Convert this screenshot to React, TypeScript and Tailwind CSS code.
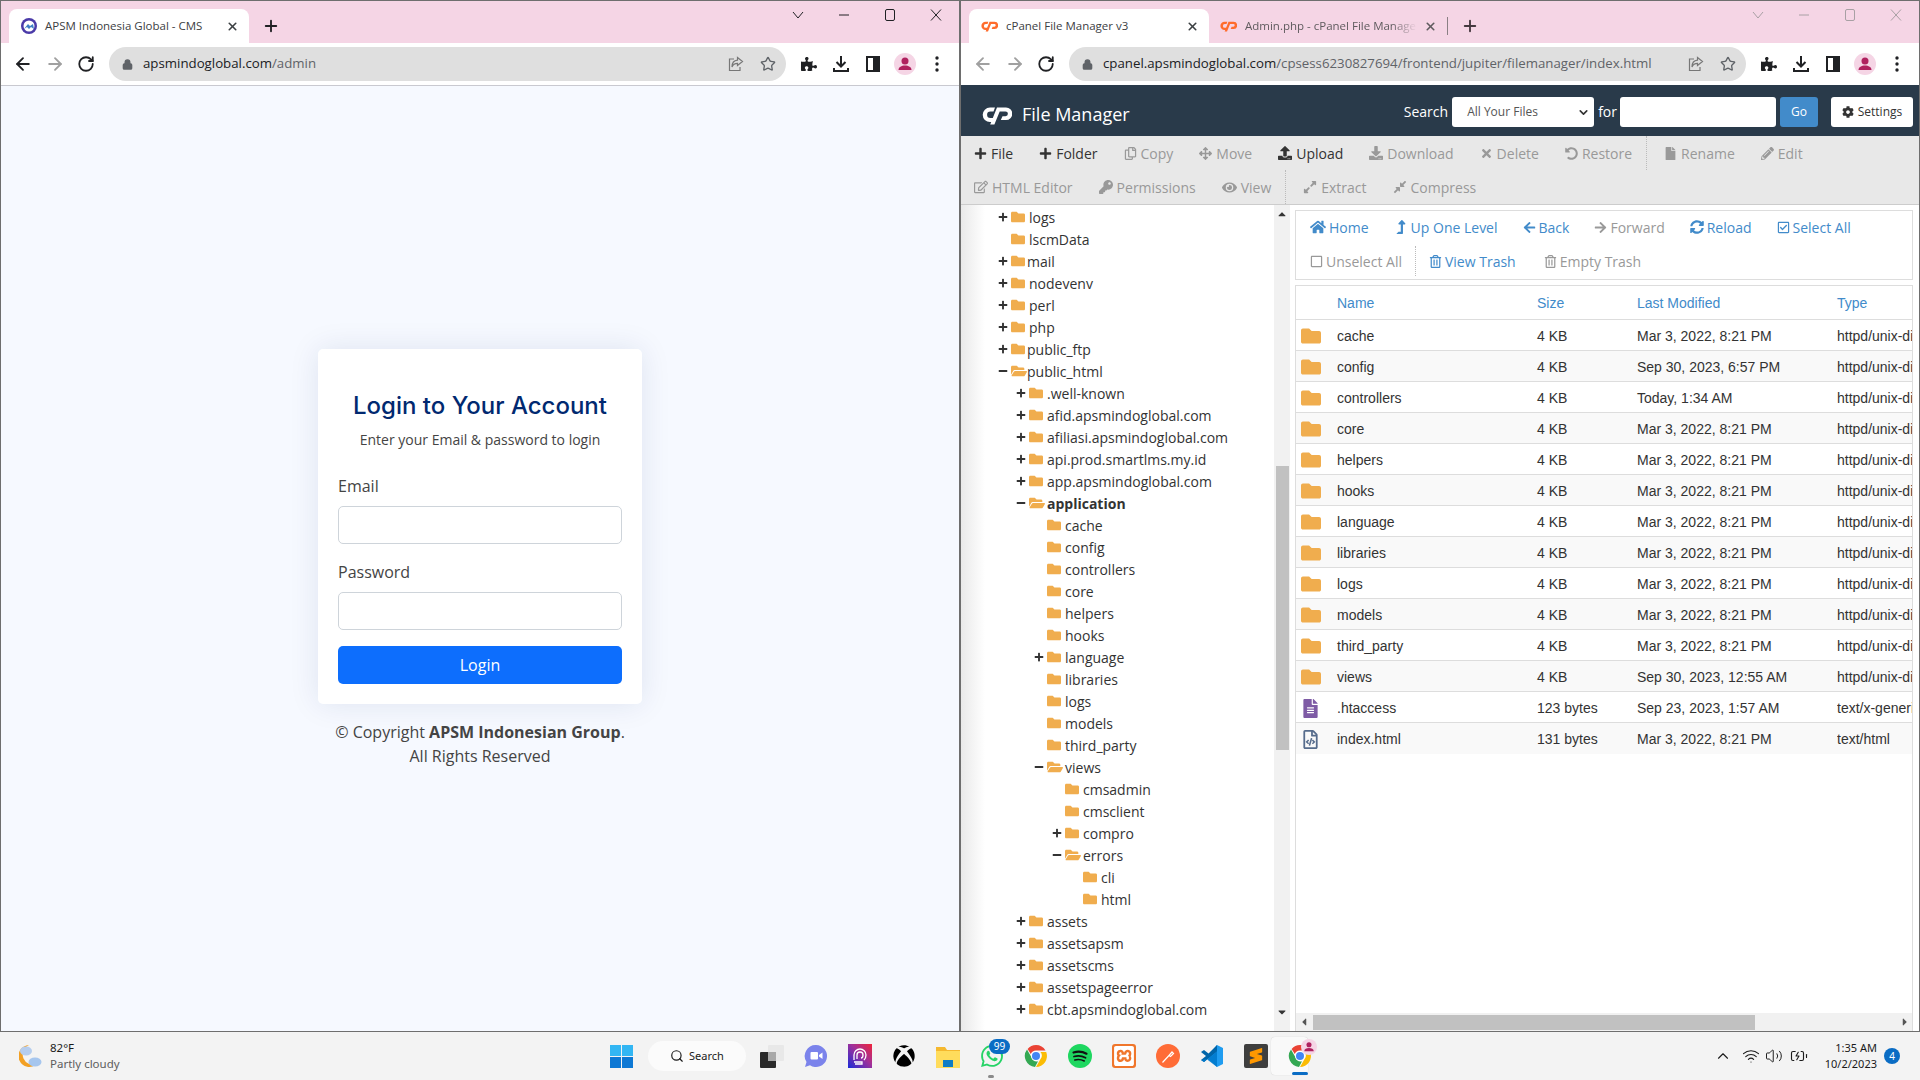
import React from 'react'
import { ArrowLeft, ArrowRight, RotateCw, Star, ChevronUp, Wifi, Volume2, BatteryCharging, Search, X, Plus, Lock, ChevronDown } from 'lucide-react'
import {
  FaPlus, FaMinus, FaFolder, FaFolderOpen, FaRegCopy, FaArrowsAlt, FaUpload, FaDownload, FaTimes, FaUndoAlt, FaFile, FaPencilAlt,
  FaRegEdit, FaKey, FaEye, FaExpandAlt, FaCompressAlt, FaHome, FaLevelUpAlt, FaArrowLeft, FaArrowRight, FaSyncAlt,
  FaRegCheckSquare, FaRegSquare, FaRegTrashAlt, FaCog, FaFileAlt, FaRegFileCode, FaPuzzlePiece, FaCaretUp, FaCaretDown, FaCaretLeft, FaCaretRight, FaXbox,
} from 'react-icons/fa'
import { SiWhatsapp, SiXampp, SiSublimetext } from 'react-icons/si'

const ApsmIcon = () => (
  <svg width="16" height="16" viewBox="0 0 16 16">
    <circle cx="8" cy="8" r="8" fill="#4a3aa8" />
    <circle cx="8" cy="8" r="5.5" fill="#fff" />
    <path d="M3 11l4-5 2 2 3-2 1 5-3-2-2 2-2-2z" fill="#3f7fc4" />
  </svg>
)

// cPanel mark
const CpLogo = ({ w, h, className }: { w: number; h: number; className: string }) => (
  <svg width={w} height={h} viewBox="0 0 30 20" fill="currentColor" className={className}>
    <path d="M13 2.500H8a7.300 7.300 0 0 0 0 14.600h2.600l1.800-4H8.400a3.300 3.300 0 0 1 0-6.600h3.100z" />
    <path d="M15 2.500h9a6.300 6.300 0 0 1 0 12.600h-5.200l1.700-3.900h3a2.400 2.400 0 0 0 0-4.800h-5.800L12.400 19.500H8.200z" />
  </svg>
)

const CpIcon = () => <CpLogo w={17} h={12} className="text-[#ff6c2c]" />

const ChromeLogo = () => (
  <svg width="24" height="24" viewBox="0 0 24 24">
    <path d="M12 1a11 11 0 0 1 9.5 5.5H12a5.5 5.5 0 0 0-5.2 3.6L3.6 4.9A11 11 0 0 1 12 1z" fill="#ea4335" />
    <path d="M22.2 8A11 11 0 0 1 12 23l4.7-8.2A5.5 5.5 0 0 0 16.5 8z" fill="#fbbc04" />
    <path d="M11 23A11 11 0 0 1 3 5.5l4.7 8.2A5.5 5.5 0 0 0 14 17.3z" fill="#34a853" />
    <circle cx="12" cy="12" r="5" fill="#fff" />
    <circle cx="12" cy="12" r="4" fill="#4285f4" />
  </svg>
)

const Avatar = ({ size = 22 }: { size?: number }) => (
  <svg width={size} height={size} viewBox="0 0 22 22">
    <circle cx="11" cy="11" r="11" fill="#f5d5e5" />
    <circle cx="11" cy="8" r="3.5" fill="#b0215f" />
    <path d="M4.5 17c0-3 3-4.5 6.500-4.500s6.500 1.500 6.500 4.500z" fill="#b0215f" />
  </svg>
)

const ShareIcon = () => (
  <svg width="16" height="16" viewBox="0 0 16 16" fill="none" stroke="#777" strokeWidth="1.200">
    <path d="M6 3H1.500v11.500H12V11" />
    <path d="M9.500 1.500L14.500 5.500 9.500 9.500V7.300C7 7.300 5 8.500 4 11c0-4 2-6.500 5.500-6.800z" />
  </svg>
)

const DownloadIcon = () => (
  <svg width="18" height="18" viewBox="0 0 18 18" fill="none" stroke="#202124" strokeWidth="2">
    <path d="M9 1v10M4.500 7L9 11.500 13.500 7M2 13v3h14v-3" />
  </svg>
)

const PanelIcon = () => (
  <svg width="14" height="16" viewBox="0 0 14 16">
    <path d="M0 0h14v16H0z" fill="#202124" />
    <path d="M2 2h5v12H2z" fill="#fff" />
  </svg>
)

const Dots = () => (
  <svg width="4" height="16" viewBox="0 0 4 16" fill="#202124">
    <circle cx="2" cy="2" r="1.700" />
    <circle cx="2" cy="8" r="1.700" />
    <circle cx="2" cy="14" r="1.700" />
  </svg>
)

const WindowButtons = ({ dim }: { dim?: boolean }) => (
  <div className={`ml-auto flex h-[26px] items-center gap-[30px] pr-[15px] ${dim ? 'text-[#a8a0a4]' : 'text-[#202124]'}`}>
    <svg width="16" height="16" viewBox="0 0 16 16" fill="none" stroke="currentColor"><path d="M3 5l5 6 5-6" /></svg>
    <svg width="16" height="16" viewBox="0 0 16 16" fill="none" stroke="currentColor"><path d="M3 8h10" /></svg>
    <svg width="16" height="16" viewBox="0 0 16 16" fill="none" stroke="currentColor"><rect x="3.500" y="2.500" width="9" height="11" rx="1.500" /></svg>
    <svg width="16" height="16" viewBox="0 0 16 16" fill="none" stroke="currentColor"><path d="M3 2.500l10 11M13 2.500l-10 11" /></svg>
  </div>
)

const ExtIcon = ({ children }: { children: React.ReactNode }) => (
  <span className="flex w-[32px] justify-center">{children}</span>
)

const Omnibox = ({ host, path, backDim }: { host: string; path: string; backDim?: boolean }) => (
  <div className="flex h-[42px] items-center bg-white">
    <div className="flex w-[108px] items-center pl-[12px] gap-[12px]">
      <ArrowLeft size={20} strokeWidth={2.200} className={backDim ? 'text-[#a0a0a0]' : 'text-[#202124]'} />
      <ArrowRight size={20} strokeWidth={2.200} className="text-[#a0a0a0]" />
      <RotateCw size={18} strokeWidth={2.400} className="text-[#202124]" />
    </div>
    <div className="flex h-[34px] w-[677px] items-center rounded-full bg-[#dfdfdf] pl-[13px] pr-[10px]">
      <Lock size={11} strokeWidth={3} className="text-[#5f6368]" fill="#5f6368" />
      <span className="ml-[10px] whitespace-nowrap text-[13.250px] text-[#202124]">{host}<span className="text-[#5f6368]">{path}</span></span>
      <div className="ml-auto flex items-center gap-[16px]">
        <ShareIcon />
        <Star size={16} className="text-[#5f6368]" />
      </div>
    </div>
    <div className="flex flex-1 items-center pl-[7px]">
      <ExtIcon><FaPuzzlePiece size={16} className="text-[#202124]" /></ExtIcon>
      <ExtIcon><DownloadIcon /></ExtIcon>
      <ExtIcon><PanelIcon /></ExtIcon>
      <ExtIcon><Avatar /></ExtIcon>
      <ExtIcon><Dots /></ExtIcon>
    </div>
  </div>
)

const Tab = ({ icon, title }: { icon: React.ReactNode; title: string }) => (
  <div className="flex h-[34px] w-[240px] items-center rounded-t-lg bg-white pl-[12px] pr-[10px]">
    {icon}
    <span className="ml-[8px] whitespace-nowrap text-[11.500px] text-[#3c4043]">{title}</span>
    <X size={13} strokeWidth={3} className="ml-auto text-[#3c4043]" />
  </div>
)

const LoginWindow = () => (
  <div className="flex h-full w-[960px] shrink-0 flex-col border border-[#6e6e6e]">
    <div className="flex h-[42px] items-end bg-[#f5d5e5] pl-[8px]">
      <Tab icon={<ApsmIcon />} title="APSM Indonesia Global - CMS" />
      <Plus size={18} strokeWidth={2.500} className="mb-[8px] ml-[13px] text-[#202124]" />
      <div className="mb-[6px] ml-auto self-start pt-[1px]"><WindowButtons /></div>
    </div>
    <Omnibox host="apsmindoglobal.com" path="/admin" />
    <main className="flex flex-1 flex-col items-center border-t border-[#c9c9d0] bg-[#f6f9ff] pt-[263px] text-[#444]">
      <div className="h-[355px] w-[324px] rounded-[5px] bg-white px-[20px] pt-[42px] shadow-[0_0_30px_rgba(1,41,112,0.1)]">
        <h1 className="text-center font-['Inter'] text-[24px] font-medium leading-[30px] text-[#012970]">Login to Your Account</h1>
        <p className="mt-[7px] text-center text-[14px] leading-[24px]">Enter your Email &amp; password to login</p>
        <label className="mt-[22px] block text-[16px] leading-[24px]">Email</label>
        <div className="mt-[8px] h-[38px] rounded-[5px] border border-[#ced4da] bg-white" />
        <label className="mt-[16px] block text-[16px] leading-[24px]">Password</label>
        <div className="mt-[8px] h-[38px] rounded-[5px] border border-[#ced4da] bg-white" />
        <button className="mt-[16px] h-[38px] w-full rounded-[5px] bg-[#0d6efd] text-[16px] text-white">Login</button>
      </div>
      <p className="mt-[16px] text-center text-[16px] leading-[24px]">© Copyright <b className="font-bold">APSM Indonesian Group</b>.<br />All Rights Reserved</p>
    </main>
  </div>
)

type Tool = { icon: React.ReactNode; label: string; dim?: boolean; sep?: boolean }

const ToolItem = ({ t }: { t: Tool }) => (
  <>
    {t.sep && <span className="-mr-[9px] -ml-[12px] h-[34px] border-l border-dotted border-[#bbb]" />}
    <span className={`flex items-center gap-[4px] whitespace-nowrap ${t.dim ? 'text-[#999]' : 'text-[#333]'}`}>{t.icon}{t.label}</span>
  </>
)

const row1: Tool[] = [
  { icon: <FaPlus size={13} />, label: 'File' },
  { icon: <FaPlus size={13} />, label: 'Folder' },
  { icon: <FaRegCopy size={13} />, label: 'Copy', dim: true },
  { icon: <FaArrowsAlt size={13} />, label: 'Move', dim: true },
  { icon: <FaUpload size={14} />, label: 'Upload' },
  { icon: <FaDownload size={14} />, label: 'Download', dim: true },
  { icon: <FaTimes size={13} />, label: 'Delete', dim: true },
  { icon: <FaUndoAlt size={13} />, label: 'Restore', dim: true },
  { icon: <FaFile size={13} />, label: 'Rename', dim: true, sep: true },
  { icon: <FaPencilAlt size={13} />, label: 'Edit', dim: true },
]

const row2: Tool[] = [
  { icon: <FaRegEdit size={14} />, label: 'HTML Editor', dim: true },
  { icon: <FaKey size={14} />, label: 'Permissions', dim: true },
  { icon: <FaEye size={15} />, label: 'View', dim: true },
  { icon: <FaExpandAlt size={14} />, label: 'Extract', dim: true, sep: true },
  { icon: <FaCompressAlt size={14} />, label: 'Compress', dim: true },
]

type Node = [number, string, '+' | '-' | '', boolean?, boolean?]

const tree: Node[] = [
  [0, 'logs', '+'], [0, 'lscmData', ''], [0, 'mail', '+', false, true], [0, 'nodevenv', '+'], [0, 'perl', '+'], [0, 'php', '+'],
  [0, 'public_ftp', '+', false, true], [0, 'public_html', '-', false, true],
  [1, '.well-known', '+'], [1, 'afid.apsmindoglobal.com', '+'], [1, 'afiliasi.apsmindoglobal.com', '+'], [1, 'api.prod.smartlms.my.id', '+'], [1, 'app.apsmindoglobal.com', '+'],
  [1, 'application', '-', true],
  [2, 'cache', ''], [2, 'config', ''], [2, 'controllers', ''], [2, 'core', ''], [2, 'helpers', ''], [2, 'hooks', ''], [2, 'language', '+'],
  [2, 'libraries', ''], [2, 'logs', ''], [2, 'models', ''], [2, 'third_party', ''], [2, 'views', '-'],
  [3, 'cmsadmin', ''], [3, 'cmsclient', ''], [3, 'compro', '+'], [3, 'errors', '-'], [4, 'cli', ''], [4, 'html', ''],
  [1, 'assets', '+'], [1, 'assetsapsm', '+'], [1, 'assetscms', '+'], [1, 'assetspageerror', '+'], [1, 'cbt.apsmindoglobal.com', '+'],
]

const indent = ['pl-[35px]', 'pl-[53px]', 'pl-[71px]', 'pl-[89px]', 'pl-[107px]']

const Tree = () => (
  <div className="relative flex w-[329px] shrink-0 overflow-hidden bg-[linear-gradient(90deg,#e9e9e9,#fff_24px)]">
    <div className="w-[313px] pt-[1px] text-[14px] text-[#333]">
      {tree.map(([d, name, t, bold, tight], i) => (
        <div key={i} className={`flex h-[22px] items-center ${indent[d]}`}>
          <span className="flex w-[15px] justify-center pr-[1px]">
            {t === '+' && <FaPlus size={10} />}
            {t === '-' && <FaMinus size={10} />}
          </span>
          <span className={`flex shrink-0 ${tight ? 'w-[16px]' : 'w-[18px]'}`}>
            {t === '-' ? <FaFolderOpen size={16} className="text-[#f0ad4e]" /> : <FaFolder size={14} className="text-[#f0ad4e]" />}
          </span>
          <span className={`whitespace-nowrap ${bold ? 'font-bold' : ''}`}>{name}</span>
        </div>
      ))}
    </div>
    <div className="flex w-[16px] flex-col items-center bg-[#f1f1f1] text-[#333]">
      <FaCaretUp size={12} className="mt-[3px]" />
      <div className="mt-[246px] h-[284px] w-[13px] bg-[#c1c1c1]" />
      <FaCaretDown size={12} className="mt-[256px]" />
    </div>
  </div>
)

const action = 'flex items-center gap-[3px] whitespace-nowrap'

const files = [
  ['cache', '4 KB', 'Mar 3, 2022, 8:21 PM', 'httpd/unix-directory'],
  ['config', '4 KB', 'Sep 30, 2023, 6:57 PM', 'httpd/unix-directory'],
  ['controllers', '4 KB', 'Today, 1:34 AM', 'httpd/unix-directory'],
  ['core', '4 KB', 'Mar 3, 2022, 8:21 PM', 'httpd/unix-directory'],
  ['helpers', '4 KB', 'Mar 3, 2022, 8:21 PM', 'httpd/unix-directory'],
  ['hooks', '4 KB', 'Mar 3, 2022, 8:21 PM', 'httpd/unix-directory'],
  ['language', '4 KB', 'Mar 3, 2022, 8:21 PM', 'httpd/unix-directory'],
  ['libraries', '4 KB', 'Mar 3, 2022, 8:21 PM', 'httpd/unix-directory'],
  ['logs', '4 KB', 'Mar 3, 2022, 8:21 PM', 'httpd/unix-directory'],
  ['models', '4 KB', 'Mar 3, 2022, 8:21 PM', 'httpd/unix-directory'],
  ['third_party', '4 KB', 'Mar 3, 2022, 8:21 PM', 'httpd/unix-directory'],
  ['views', '4 KB', 'Sep 30, 2023, 12:55 AM', 'httpd/unix-directory'],
  ['.htaccess', '123 bytes', 'Sep 23, 2023, 1:57 AM', 'text/x-generic'],
  ['index.html', '131 bytes', 'Mar 3, 2022, 8:21 PM', 'text/html'],
]

const cols = 'grid grid-cols-[41px_200px_100px_200px_77px] items-center pt-[2px]'

const FileIcon = ({ name }: { name: string }) => {
  if (name === '.htaccess') return <FaFileAlt size={19} className="ml-[5px] text-[#7e5ba5]" />
  if (name === 'index.html') return <FaRegFileCode size={19} className="ml-[5px] text-[#566c8c]" />
  return <FaFolder size={20} className="ml-[5px] text-[#f0ad4e]" />
}

const FilePanel = () => (
  <div className="flex min-w-0 flex-1 flex-col bg-white pl-[5px] pr-[6px] pt-[5px]">
    <div className="h-[70px] border border-[#ddd] pl-[14px] text-[14px] text-[#428bca]">
      <div className="-mt-[1px] flex h-[34px] items-center gap-[25px]">
        <span className={action}><FaHome size={16} />Home</span>
        <span className={action}><FaLevelUpAlt size={14} />Up One Level</span>
        <span className={action}><FaArrowLeft size={13} />Back</span>
        <span className={`${action} text-[#999]`}><FaArrowRight size={13} />Forward</span>
        <span className={action}><FaSyncAlt size={14} />Reload</span>
        <span className={action}><FaRegCheckSquare size={13} />Select All</span>
      </div>
      <div className="flex h-[34px] items-center">
        <span className={`${action} text-[#999]`}><FaRegSquare size={13} />Unselect All</span>
        <span className="mx-[13px] h-[30px] border-l border-dotted border-[#bbb]" />
        <span className={`${action} mr-[28px]`}><FaRegTrashAlt size={13} />View Trash</span>
        <span className={`${action} text-[#999]`}><FaRegTrashAlt size={13} />Empty Trash</span>
      </div>
    </div>
    <div className="mt-[5px] flex min-h-0 flex-1 flex-col border-x border-t border-[#ddd] font-['Liberation_Sans'] text-[14px] text-[#333]">
      <div className={`${cols} h-[34px] shrink-0 border-b border-[#ddd] text-[#428bca]`}>
        <span /><span>Name</span><span>Size</span><span>Last Modified</span><span>Type</span>
      </div>
      <div className="flex-1">
        {files.map((f, i) => (
          <div key={f[0]} className={`${cols} h-[31px] overflow-hidden border-b border-[#ddd] ${i % 2 ? 'bg-[#f9f9f9]' : 'bg-white'} ${i === 13 ? 'border-b-0' : ''}`}>
            <FileIcon name={f[0]} />
            <span>{f[0]}</span><span>{f[1]}</span><span>{f[2]}</span>
            <span className="overflow-hidden whitespace-nowrap">{f[3]}</span>
          </div>
        ))}
      </div>
      <div className="flex h-[18px] shrink-0 items-center bg-[#f1f1f1] text-[#555]">
        <FaCaretLeft size={12} className="ml-[2px]" />
        <div className="ml-[3px] h-[15px] w-[442px] bg-[#c1c1c1]" />
        <FaCaretRight size={12} className="ml-auto mr-[1px]" />
      </div>
    </div>
  </div>
)

const ManagerWindow = () => (
  <div className="flex h-full min-w-0 flex-1 flex-col border-y border-x border-[#6e6e6e]">
    <div className="flex h-[42px] items-end bg-[#f5d5e5] pl-[8px]">
      <Tab icon={<CpIcon />} title="cPanel File Manager v3" />
      <div className="flex h-[34px] w-[238px] items-center pl-[11px] pr-[10px]">
        <CpIcon />
        <span className="ml-[8px] w-[172px] overflow-hidden whitespace-nowrap text-[11.500px] text-[#5f5b5e] [mask-image:linear-gradient(90deg,#000_85%,transparent)]">Admin.php - cPanel File Manager v3</span>
        <X size={13} strokeWidth={3} className="ml-auto text-[#5f5b5e]" />
      </div>
      <span className="mb-[8px] h-[18px] border-l border-[#8a7f84]" />
      <Plus size={18} strokeWidth={2.500} className="mb-[8px] ml-[13px] text-[#45383e]" />
      <div className="mb-[6px] ml-auto self-start pt-[1px]"><WindowButtons dim /></div>
    </div>
    <Omnibox host="cpanel.apsmindoglobal.com" path="/cpsess6230827694/frontend/jupiter/filemanager/index.html" backDim />
    <header className="flex h-[51px] items-center bg-[#293a4a] pl-[21px] pr-[6px] pt-[3px] text-white">
      <CpLogo w={30} h={20} className="mt-[5px] text-white" />
      <span className="ml-[10px] mt-[4px] text-[18px]">File Manager</span>
      <span className="ml-auto -mt-[2px] text-[14px] font-medium">Search</span>
      <div className="ml-[4px] flex h-[30px] w-[142px] items-center justify-between rounded-[3px] bg-white pl-[15px] pr-[4px] text-[12px] text-[#555]">
        All Your Files <ChevronDown size={13} strokeWidth={3} className="text-[#333]" />
      </div>
      <span className="-mt-[2px] ml-[4px] text-[14px] font-medium">for</span>
      <div className="ml-[3px] h-[30px] w-[156px] rounded-[3px] bg-white" />
      <div className="ml-[4px] flex h-[30px] w-[38px] items-center justify-center rounded-[3px] bg-[#428bca] text-[12px]">Go</div>
      <div className="ml-[13px] flex h-[30px] w-[82px] items-center justify-center gap-[4px] rounded-[3px] bg-white text-[12px] text-[#333]"><FaCog size={12} />Settings</div>
    </header>
    <div className="h-[69px] border-b border-[#ccc] bg-[#e8e8e8] pl-[13px] text-[14px]">
      <div className="flex h-[34px] items-center gap-[26px]">{row1.map(t => <ToolItem key={t.label} t={t} />)}</div>
      <div className="flex h-[34px] items-center gap-[26px]">{row2.map(t => <ToolItem key={t.label} t={t} />)}</div>
    </div>
    <div className="flex min-h-0 flex-1 overflow-hidden">
      <Tree />
      <FilePanel />
    </div>
  </div>
)

const Tile = ({ children }: { children: React.ReactNode }) => (
  <div className="relative flex h-[48px] w-[44px] items-center justify-center">{children}</div>
)

const TaskbarIcons = () => (
  <>
    <Tile>
      <svg width="24" height="24" viewBox="0 0 24 24">
        <path d="M12 1a11 11 0 1 1-6 20.200L1 23l1.500-5A11 11 0 0 1 12 1z" fill="#7b83eb" />
        <rect x="6.500" y="8" width="7.500" height="7.500" rx="1" fill="#fff" />
        <path d="M15 11l3.500-2.500v6.500L15 12.500z" fill="#fff" />
      </svg>
    </Tile>
    <Tile>
      <svg width="24" height="24" viewBox="0 0 24 24">
        <defs>
          <linearGradient id="mix" x1="0" y1="1" x2="1" y2="0">
            <stop offset="0" stopColor="#1a2bd8" /><stop offset="0.55" stopColor="#a0309a" /><stop offset="1" stopColor="#f0243a" />
          </linearGradient>
        </defs>
        <rect width="24" height="24" fill="url(#mix)" />
        <path d="M6 16V11a6 6 0 0 1 12 0c0 3-1 4-2 5M9 15v-4a3 3 0 0 1 6 0c0 2-1 3-2 3M6 18h8v2H7" fill="none" stroke="#fff" strokeWidth="1.300" />
      </svg>
    </Tile>
    <Tile><FaXbox size={22} className="text-black" /></Tile>
    <Tile>
      <svg width="24" height="24" viewBox="0 0 24 24">
        <path d="M0 3h9l2 3h13v18H0z" fill="#f5b82e" />
        <path d="M0 7h24v17H0z" fill="#ffdc5c" />
        <path d="M7 16h10v7H7z" fill="#0f7cc4" />
      </svg>
    </Tile>
    <Tile>
      <SiWhatsapp size={22} className="text-[#25d366]" />
      <span className="absolute left-[19px] top-[7px] flex h-[15px] w-[21px] items-center justify-center rounded-full bg-[#0a6cc4] text-[10px] text-white">99</span>
      <span className="absolute bottom-[2px] left-[18px] h-[3px] w-[6px] rounded-full bg-[#8a8a8a]" />
    </Tile>
    <Tile><ChromeLogo /></Tile>
    <Tile>
      <svg width="24" height="24" viewBox="0 0 24 24" fill="none" stroke="#111" strokeLinecap="round">
        <circle cx="12" cy="12" r="12" fill="#1ed760" stroke="none" />
        <path d="M5.500 8.500c4-1.200 9-1 13 1.200" strokeWidth="2.200" />
        <path d="M6 12.500c3.500-1 8-.7 11.500 1.200" strokeWidth="1.800" />
        <path d="M6.800 16c3-.8 6.500-.5 9.500 1" strokeWidth="1.500" />
      </svg>
    </Tile>
    <Tile>
      <span className="flex h-[24px] w-[24px] items-center justify-center rounded-[3px] bg-[#f0762b]"><SiXampp size={20} className="text-white" /></span>
    </Tile>
    <Tile>
      <svg width="24" height="24" viewBox="0 0 24 24" fill="none" stroke="#fff">
        <circle cx="12" cy="12" r="12" fill="#ff6c37" stroke="none" />
        <path d="M6.500 18.500l6.500-7M13 11.500l3-3.500 1.500 1.500-3 3-1.500-1z" strokeWidth="1.200" />
      </svg>
    </Tile>
    <Tile>
      <svg width="24" height="24" viewBox="0 0 24 24">
        <path d="M17 1l6 3v16l-6 3L7 13.500z" fill="#1f9cf0" />
        <path d="M17 1v6.500L4 18l-3-2 5-4-5-4 3-2 4.500 3.500z" fill="#0065a9" />
        <path d="M1 16l3 2 13-10.500V23L6.500 15z" fill="#007acc" opacity="0.900" />
      </svg>
    </Tile>
    <Tile>
      <span className="flex h-[24px] w-[24px] items-center justify-center rounded-[2px] bg-[#3e3e3e]"><SiSublimetext size={16} className="text-[#ff9800]" /></span>
    </Tile>
    <Tile>
      <span className="absolute left-[-7px] top-[5px] h-[38px] w-[37px] rounded-[4px] bg-[#f9f9f9] shadow-[0_0_1px_rgba(0,0,0,0.2)]" />
      <span className="relative"><ChromeLogo /></span>
    </Tile>
  </>
)

const Taskbar = () => (
  <footer className="relative flex h-[48px] shrink-0 items-center bg-[#f3f3f3] font-['Noto_Sans'] text-[#1a1a1a]">
    <div className="flex w-[610px] items-center pl-[19px]">
      <svg width="24" height="24" viewBox="0 0 24 24">
        <path d="M10 1a11 11 0 1 0 8 19A9 9 0 0 1 10 1z" fill="#f2a024" />
        <ellipse cx="7" cy="7" rx="6" ry="4.500" fill="#b5cdee" />
        <ellipse cx="16" cy="18" rx="6.500" ry="4.500" fill="#a6c6ee" />
      </svg>
      <div className="ml-[7px] flex flex-col text-[11.500px] leading-[16px]">
        <span>82°F</span>
        <span className="text-[#5d5d5d]">Partly cloudy</span>
      </div>
    </div>
    <div className="grid h-[23px] w-[23px] grid-cols-2 gap-[1px]">
      <span className="bg-[#32b6f3]" /><span className="bg-[#32b6f3]" /><span className="bg-[#0d78d4]" /><span className="bg-[#0d78d4]" />
    </div>
    <div className="ml-[15px] flex h-[30px] w-[98px] items-center justify-center gap-[5px] rounded-full bg-[#fbfbfb] text-[11px]">
      <Search size={14} strokeWidth={2} />Search
    </div>
    <div className="ml-[4px] flex w-[44px] justify-center">
      <svg width="24" height="23" viewBox="0 0 24 23">
        <rect x="8" width="16" height="16" rx="1" fill="#e8e8e8" />
        <rect y="7" width="16" height="16" rx="1" fill="#2a2a2a" />
        <rect x="8" y="7" width="8" height="9" fill="#a8a8a8" />
      </svg>
    </div>
    <TaskbarIcons />
    <span className="absolute left-[1292px] bottom-[5px] h-[3px] w-[16px] rounded-full bg-[#0a6cc4]" />
    <span className="absolute left-[1301px] top-[7px]"><Avatar size={16} /></span>
    <div className="ml-auto flex items-center pr-[20px]">
      <ChevronUp size={18} strokeWidth={1.500} />
      <Wifi size={18} strokeWidth={1.500} className="ml-[10px]" />
      <Volume2 size={18} strokeWidth={1.300} className="ml-[5px]" />
      <BatteryCharging size={18} strokeWidth={1.500} className="ml-[7px]" />
      <div className="ml-[9px] flex w-[60px] flex-col items-end text-[11px] leading-[16px]">
        <span>1:35 AM</span>
        <span>10/2/2023</span>
      </div>
      <span className="ml-[7px] flex h-[16px] w-[16px] items-center justify-center rounded-full bg-[#0a6cc4] text-[10px] text-white">4</span>
    </div>
  </footer>
)

export default function App() {
  return (
    <div className="flex h-[1080px] w-[1920px] flex-col overflow-hidden bg-[#f3f3f3] font-['Open_Sans',sans-serif]">
      <div className="flex h-[1032px]">
        <LoginWindow />
        <ManagerWindow />
      </div>
      <Taskbar />
    </div>
  )
}
